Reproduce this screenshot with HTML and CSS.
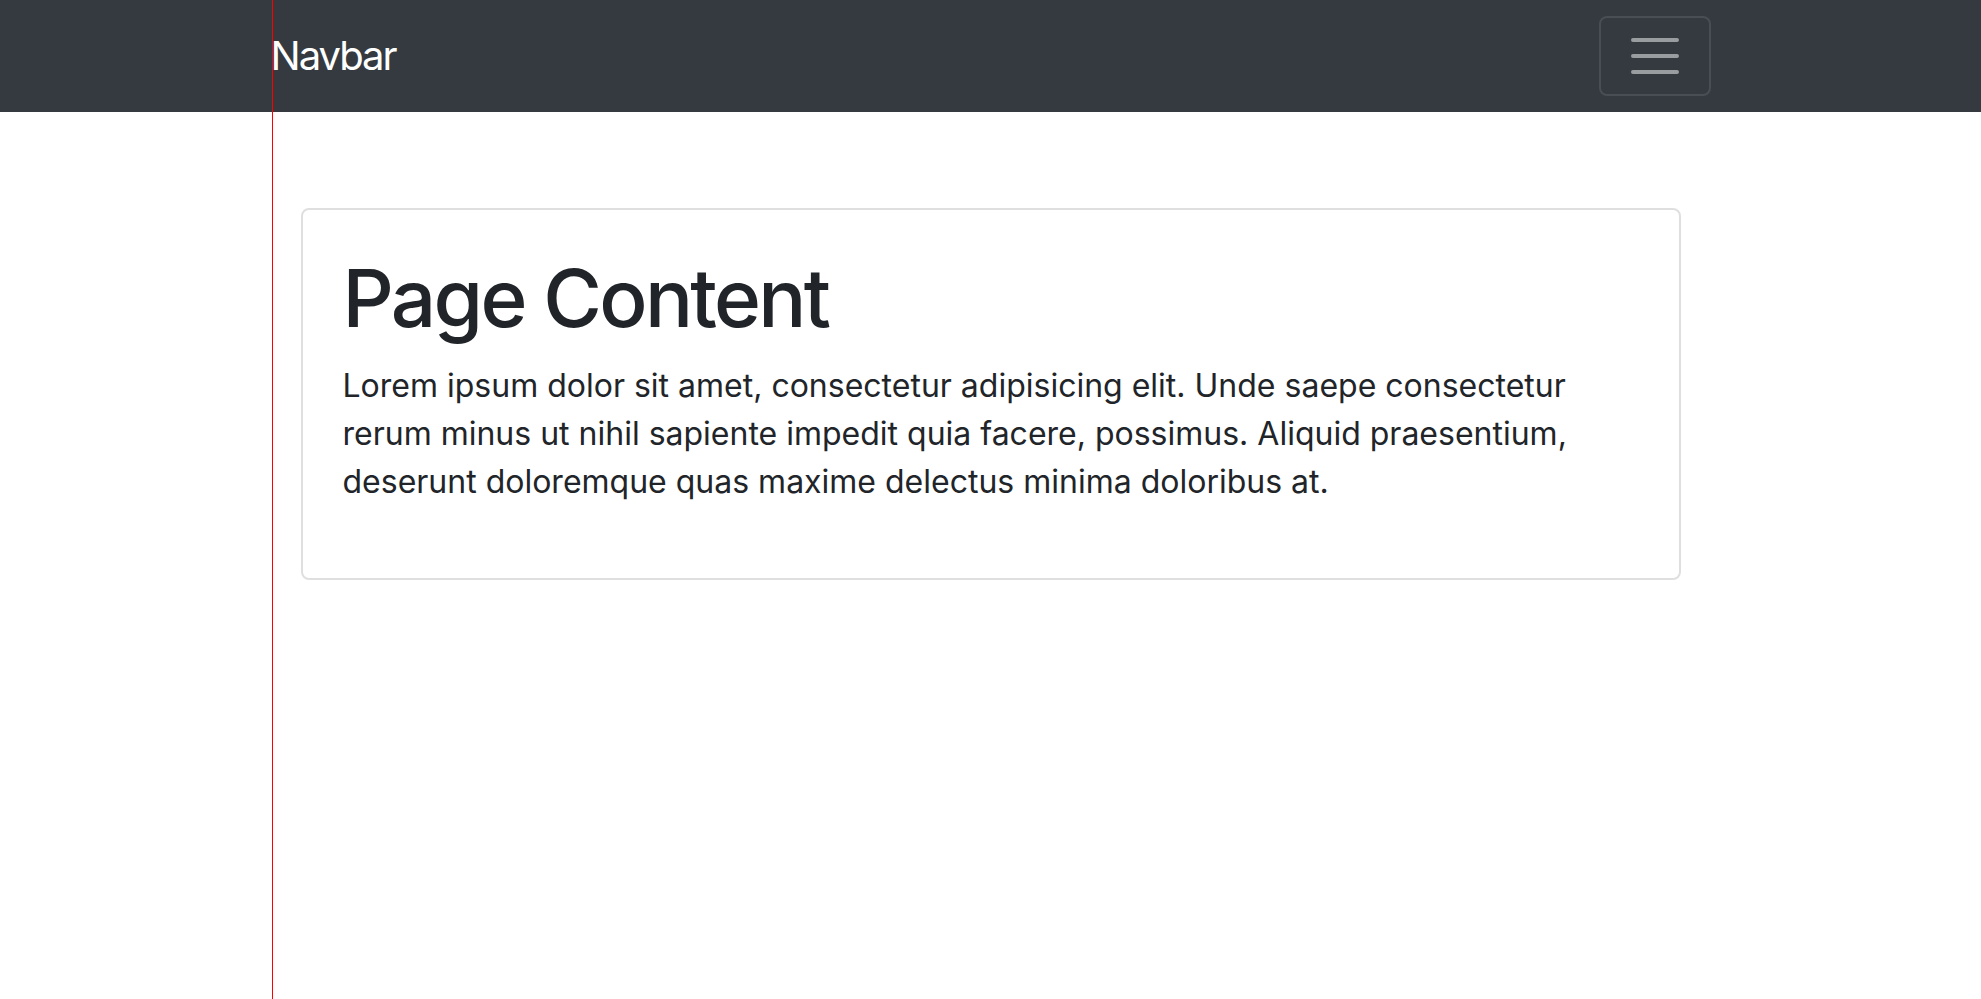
FILE: index.html
```html
<!DOCTYPE html>
<html lang="en">
<head>
<meta charset="utf-8">
<title>Navbar</title>
<link rel="stylesheet" href="styles.css">
</head>
<body>
<nav class="navbar">
  <div class="nav-inner">
    <a class="brand" href="#">Navbar</a>
    <button class="toggler" type="button" aria-label="Toggle navigation">
      <svg class="toggler-icon" viewBox="0 0 30 30" width="60" height="60"><path stroke="rgba(255,255,255,0.5)" stroke-width="2" stroke-linecap="round" d="M4 7h22M4 15h22M4 23h22"/></svg>
    </button>
  </div>
</nav>
<main class="container">
  <div class="card">
    <div class="card-body">
      <h1 class="title">Page Content</h1>
      <p class="text">Lorem ipsum dolor sit amet, consectetur adipisicing elit. Unde saepe consectetur rerum minus ut nihil sapiente impedit quia facere, possimus. Aliquid praesentium, deserunt doloremque quas maxime delectus minima doloribus at.</p>
    </div>
  </div>
</main>
<div class="guide"></div>
</body>
</html>
```
FILE: styles.css
```css
html, body {
  margin: 0;
  padding: 0;
}
body {
  font-family: Inter, "Noto Sans", "Liberation Sans", sans-serif;
  color: #212529;
  background: #fff;
  font-size: 32px;
  line-height: 1.5;
}
.navbar {
  background: #343a40;
  padding: 16px 0;
}
.nav-inner {
  width: 1440px;
  margin: 0 auto;
  display: flex;
  justify-content: space-between;
  align-items: center;
}
.brand {
  color: #fff;
  text-decoration: none;
  font-size: 40px;
  line-height: 60px;
  padding: 10px 0;
  letter-spacing: -2px;
}
.toggler {
  width: 112px;
  height: 80px;
  padding: 0;
  margin: 0;
  background: transparent;
  border: 2px solid rgba(255,255,255,0.1);
  border-radius: 8px;
  display: flex;
  align-items: center;
  justify-content: center;
}
.toggler-icon {
  display: block;
}
.container {
  width: 1440px;
  margin: 0 auto;
  padding: 0 30px;
  box-sizing: border-box;
}
.card {
  margin-top: 96px;
  border: 2px solid rgba(0,0,0,0.125);
  border-radius: 8px;
}
.card-body {
  padding: 40px;
}
.title {
  margin: 0 0 16px;
  font-size: 80px;
  font-weight: 500;
  line-height: 1.2;
  letter-spacing: -2.7px;
}
.text {
  margin: 0 0 32px;
  font-size: 32px;
  line-height: 48px;
  letter-spacing: 0;
}
.guide {
  position: fixed;
  left: 272px;
  top: 0;
  bottom: 0;
  width: 1px;
  background: #ff0000;
}
```
